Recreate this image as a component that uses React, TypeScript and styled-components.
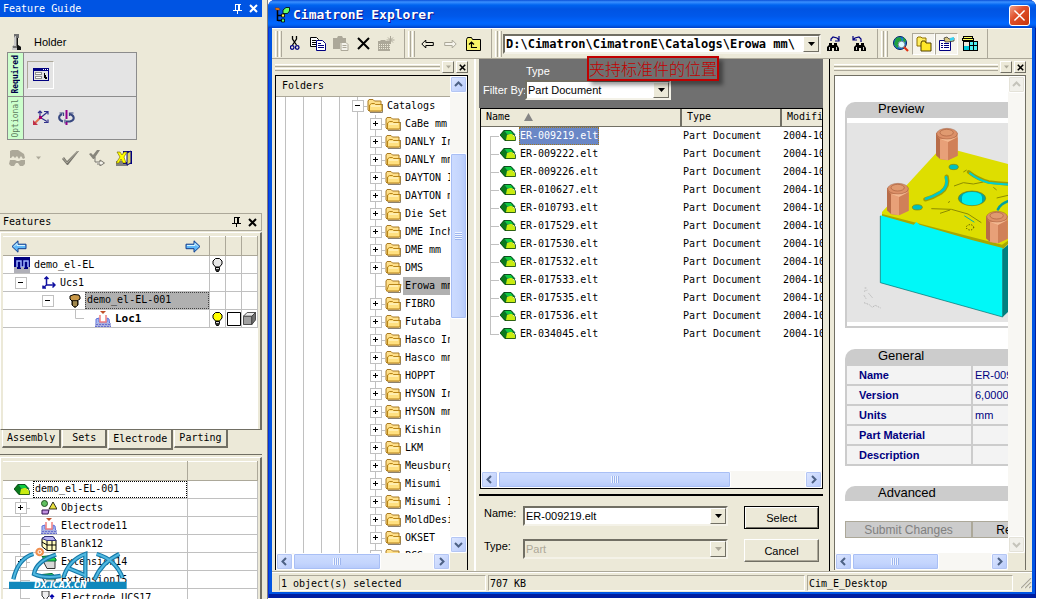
import React from "react";
import styled, { createGlobalStyle, css } from "styled-components";

const face = "#ece9d8";
const shade = "#aca899";
const dark = "#716f64";
const mono = `"DejaVu Sans Mono", "Liberation Mono", monospace`;
const sans = `"Liberation Sans", Arial, sans-serif`;

const GlobalStyle = createGlobalStyle`
  * { box-sizing: border-box; }
  html, body { margin: 0; background: #fff; overflow: hidden; }
  body { font: 10px/18px ${mono}; color: #000; }
  button, input, select { font: inherit; color: inherit; margin: 0; padding: 0; border: 0; border-radius: 0; background: none; }
  svg { display: block; flex: none; }
  table { border-collapse: collapse; border-spacing: 0; table-layout: fixed; }
  th, td { padding: 0; font-weight: inherit; text-align: left; }
  h1, h2 { margin: 0; font-size: inherit; font-weight: inherit; }
`;

/* ---------- shell ---------- */

const Screen = styled.div`
  display: grid;
  grid-template-columns: 268px minmax(0, 1fr);
  height: 100vh;
  overflow: hidden;
`;

const Sidebar = styled.aside`
  display: flex;
  flex-direction: column;
  min-height: 0;
  position: relative;
  background: ${face};
  border-right: 1px solid #808080;
  padding-right: 5px;
  overflow: hidden;
`;

const PanelTitle = styled.header<{ $active?: boolean }>`
  display: flex;
  flex: none;
  align-items: center;
  height: ${(p) => (p.$active ? 17 : 18)}px;
  padding: 0 1px 0 3px;
  background: ${(p) => (p.$active ? "#0054e3" : face)};
  color: ${(p) => (p.$active ? "#fff" : "#000")};
  ${(p) => !p.$active && css`border: 1px solid ${shade}; border-left: 0;`}
  h2 { flex: 1; }
`;

const TitleButton = styled.button`
  display: grid;
  place-items: center;
  width: 16px;
  height: 14px;
`;

const Guide = styled.section`
  flex: none;
  height: 196px;
  padding: 14px 7px 0;
`;

const HolderLine = styled.div`
  display: flex;
  gap: 13px;
  align-items: center;
  height: 21px;
  padding-left: 5px;
  font: 11px/18px ${sans};
`;

const StepTable = styled.div`
  display: grid;
  grid-template-columns: 16px 1fr;
  width: 130px;
  border: 1px solid #8c8c8c;
`;

const StepLabel = styled.div<{ $required?: boolean }>`
  display: grid;
  place-items: center;
  height: ${(p) => (p.$required ? 44 : 42)}px;
  background: #ccffcc;
  border-right: 1px solid #8c8c8c;
  border-bottom: ${(p) => (p.$required ? "1px solid #8c8c8c" : "0")};
  color: ${(p) => (p.$required ? "#00004a" : "#5c7a5c")};
  font-size: 8px;
  line-height: 12px;
  font-weight: ${(p) => (p.$required ? 700 : 400)};
  writing-mode: vertical-rl;
  span { transform: rotate(180deg); }
`;

const StepTools = styled.div<{ $line?: boolean }>`
  display: flex;
  align-items: center;
  gap: 9px;
  padding-left: ${(p) => (p.$line ? 3 : 9)}px;
  background: #e4e4e4;
  border-bottom: ${(p) => (p.$line ? "1px solid #8c8c8c" : "0")};
`;

const PlainButton = styled.button<{ $start?: boolean }>`
  display: grid;
  align-items: center;
  justify-items: ${(p) => (p.$start ? "start" : "center")};
  min-width: 16px;
  height: 20px;
  color: ${(p) => (p.$start ? shade : "inherit")};
`;

const SunkenButton = styled(PlainButton)`
  width: 27px;
  height: 28px;
  border: 1px solid;
  border-color: ${shade} #fff #fff ${shade};
`;

const ActionRow = styled.div`
  display: flex;
  align-items: center;
  gap: 10px;
  height: 36px;
  padding-left: 2px;
`;

const FeatureBox = styled.section`
  flex: none;
  height: 198px;
  margin-top: 1px;
  padding: 3px 2px 0;
  border: 1px solid;
  border-color: #fff ${dark} ${dark} #fff;
  border-right-width: 2px;
  display: flex;
  flex-direction: column;
`;

const Paper = styled.div`
  flex: 1;
  min-height: 0;
  background: #fff;
  overflow: hidden;
`;

const GridTable = styled.table`
  width: 100%;
  background: #fff;
  tbody td {
    height: 18px;
    border-bottom: 1px solid #c0c0c0;
    border-right: 1px solid #c0c0c0;
    line-height: 16px;
  }
  thead th {
    height: 19px;
    background: ${face};
    border-right: 1px solid ${shade};
    border-bottom: 1px solid ${shade};
    border-top: 1px solid #fff;
  }
`;

const NavRow = styled.div`
  display: flex;
  justify-content: space-between;
  padding: 0 8px;
  button { height: 16px; }
`;

const Cell = styled.div<{ $indent: number; $gap?: number }>`
  display: flex;
  align-items: center;
  gap: ${(p) => p.$gap ?? 4}px;
  height: 17px;
  padding-left: ${(p) => p.$indent}px;
  white-space: nowrap;
`;

const Centered = styled.div`
  display: grid;
  place-items: center;
`;

const Expander = styled.button`
  flex: none;
  width: 12px;
  height: 12px;
  display: grid;
  place-items: center;
  background: #fff;
  border: 1px solid #c0c0c0;
`;

const Chosen = styled.span`
  flex: 1;
  height: 17px;
  padding-left: 1px;
  background: #b0b0b0;
  border: 1px dotted #444;
  line-height: 14px;
`;

const Focused = styled(Chosen)`
  background: #fff;
  border-color: #000;
`;

const Loud = styled.b`
  font-size: 11px;
`;

const Tabs = styled.nav`
  display: flex;
  flex: none;
  height: 25px;
  padding-left: 2px;
  border-bottom: 1px solid ${dark};
`;

const Tab = styled.button<{ $on?: boolean }>`
  height: ${(p) => (p.$on ? 20 : 18)}px;
  padding: 0 4px;
  margin-right: 1px;
  line-height: 16px;
  min-width: 45px;
  border-right: 2px solid ${dark};
  border-bottom: 2px solid ${dark};
  border-left: 1px solid #fff;
  background: ${face};
`;

const ObjectBox = styled.section`
  flex: 1;
  min-height: 0;
  margin-top: 2px;
  padding: 3px 2px 0;
  border: 1px solid #fff;
  border-right: 2px solid ${dark};
  border-bottom: 0;
  overflow: hidden;
`;

const Watermark = styled.div`
  position: absolute;
  left: 8px;
  bottom: 9px;
`;

/* ---------- explorer window ---------- */

const Window = styled.main`
  display: flex;
  flex-direction: column;
  min-width: 0;
  height: calc(100vh - 1px);
  margin-right: 1px;
  background: #0054e3;
  border-radius: 7px 7px 0 0;
  padding: 0 4px 6px;
  box-shadow: inset 1px 0 #0831d9, inset -1px 0 #001ea0, inset 0 -4px #001ea0;
  overflow: hidden;
`;

const TitleBar = styled.header`
  display: flex;
  flex: none;
  align-items: center;
  gap: 3px;
  height: 28px;
  margin: 0 -4px;
  padding: 2px 6px 0 7px;
  color: #fff;
  font-size: 13px;
  font-weight: 700;
  text-shadow: 1px 1px #0f1089;
  background: linear-gradient(#0a4fd8, #3a90ff 2px, #0064f0 5px, #0054e3 9px, #0058ea 16px, #0066ff 23px, #0062f5 25px, #003fc6 28px);
  h1 { flex: 1; }
`;

const CloseButton = styled.button`
  display: grid;
  place-items: center;
  width: 21px;
  height: 21px;
  border: 1px solid #fff;
  border-radius: 3px;
  background: linear-gradient(135deg, #f0a088, #e0502c 40%, #c83408);
`;

const ToolBar = styled.div`
  display: flex;
  flex: none;
  align-items: center;
  height: 31px;
  padding-right: 44px;
  background: ${face};
  border-top: 1px solid #fff;
  border-bottom: 1px solid ${shade};
`;

const Band = styled.div<{ $grow?: boolean }>`
  display: flex;
  align-items: center;
  height: 29px;
  flex: ${(p) => (p.$grow ? "1 1 0" : "none")};
  min-width: 0;
  border-right: 1px solid ${shade};
  padding: 0 6px 0 3px;
`;

const Grip = styled.span`
  flex: none;
  width: 7px;
  height: 26px;
  margin-right: 1px;
  background: linear-gradient(90deg, #fff 1px, ${face} 1px 2px, ${shade} 2px 3px, ${face} 3px 4px, #fff 4px 5px, ${face} 5px 6px, ${shade} 6px);
`;

const Tool = styled.button<{ $pressed?: boolean; $wide?: boolean }>`
  flex: none;
  display: grid;
  place-items: center;
  width: ${(p) => (p.$wide ? 25 : 23)}px;
  height: 22px;
  ${(p) =>
    p.$pressed &&
    css`
      border: 1px solid;
      border-color: ${shade} #fff #fff ${shade};
      background: #f6f4ec;
    `}
`;

const Combo = styled.div<{ $bold?: boolean; $off?: boolean }>`
  display: flex;
  flex: 1 1 0;
  min-width: 0;
  height: 20px;
  background: ${(p) => (p.$off ? face : "#fff")};
  color: ${(p) => (p.$off ? shade : "#000")};
  border: 2px solid;
  border-color: ${dark} #f4f2e8 #f4f2e8 ${dark};
  font: ${(p) => (p.$bold ? `700 12px/16px ${mono}` : `11px/16px ${sans}`)};
  input, select {
    flex: 1;
    min-width: 0;
    width: 0;
    height: 16px;
    padding-left: 1px;
    appearance: none;
    outline: 0;
    opacity: 1;
  }
`;

const DropButton = styled.button<{ $off?: boolean }>`
  flex: none;
  display: grid;
  place-items: center;
  width: 16px;
  height: 16px;
  background: ${face};
  color: ${(p) => (p.$off ? shade : "#000")};
  border: 1px solid;
  border-color: #fff ${dark} ${dark} #fff;
`;

const Panes = styled.div`
  flex: 1;
  min-height: 0;
  display: grid;
  grid-template-columns: 206px minmax(0, 1fr) 206px;
  background: ${face};
`;

const DockPane = styled.section<{ $side?: boolean }>`
  display: flex;
  flex-direction: column;
  min-width: 0;
  min-height: 0;
  ${(p) =>
    p.$side
      ? css`margin-left: 3px; border-left: 1px solid #000; padding: 0 6px 1px 4px;`
      : css`border-right: 2px solid #fff; margin-right: 2px; padding: 0 6px 1px 3px;`}
`;

const DockHead = styled.div`
  display: flex;
  flex: none;
  align-items: center;
  gap: 2px;
  height: 16px;
`;

const DockGrip = styled.span`
  flex: 1;
  height: 7px;
  background: linear-gradient(#fff 1px, ${face} 1px 2px, ${shade} 2px 3px, ${face} 3px 4px, #fff 4px 5px, ${face} 5px 6px, ${shade} 6px);
`;

const DockButton = styled.button<{ $faint?: boolean }>`
  display: grid;
  place-items: center;
  width: 12px;
  height: 12px;
  color: ${(p) => (p.$faint ? shade : "#000")};
  border: 1px solid;
  border-color: #fff ${dark} ${dark} #fff;
`;

const ScrollFrame = styled.div<{ $soft?: boolean }>`
  flex: 1;
  min-height: 0;
  display: grid;
  grid-template-columns: minmax(0, 1fr) 17px;
  grid-template-rows: minmax(0, 1fr) 17px;
  border: 1px solid ${(p) => (p.$soft ? dark : "#000")};
  border-bottom: 0;
  background: ${face};
`;

const Tree = styled.div`
  background: #fff;
  overflow: hidden;
`;

const TreeHeader = styled.div`
  height: 21px;
  padding-left: 6px;
  background: ${face};
  border-bottom: 1px solid ${shade};
  line-height: 20px;
`;

const TreeList = styled.ul`
  list-style: none;
  margin: 0;
  padding: 0 0 0 1px;
`;

const TreeRow = styled.li`
  display: flex;
  align-items: center;
  height: 18px;
  white-space: nowrap;
`;

const Rail = styled.span<{ $elbow?: boolean }>`
  flex: none;
  display: grid;
  place-items: center;
  width: 18px;
  height: 18px;
  background: linear-gradient(90deg, transparent 8px, #c0c0c0 8px 9px, transparent 9px)
    ${(p) => p.$elbow && ", linear-gradient(transparent 9px, #c0c0c0 9px 10px, transparent 10px) 8px 0 / 10px 18px no-repeat"};
`;

const TreeLabel = styled.span<{ $on?: boolean }>`
  flex: 1;
  height: 18px;
  margin-left: 1px;
  padding-left: 2px;
  line-height: 17px;
  background: ${(p) => (p.$on ? "#b0b0b0" : "none")};
`;

/* scroll bars */

const Bar = styled.div<{ $v?: boolean }>`
  display: flex;
  flex-direction: ${(p) => (p.$v ? "column" : "row")};
  background: #f8f7f3;
  min-width: 0;
  min-height: 0;
  ${(p) => (p.$v ? "width: 17px;" : "height: 17px;")}
`;

const ArrowButton = styled.button<{ $off?: boolean }>`
  flex: none;
  display: grid;
  place-items: center;
  width: 17px;
  height: 17px;
  border: 1px solid #fff;
  border-radius: 2px;
  color: ${(p) => (p.$off ? "#c5c4bb" : "#4d6185")};
  background: ${(p) => (p.$off ? "#f1f0ea" : "linear-gradient(135deg, #dfe8ff, #b7cafb)")};
  box-shadow: inset 0 0 0 1px ${(p) => (p.$off ? "#e4e2d8" : "#b4c6f4")};
`;

const Thumb = styled.div<{ $v?: boolean; $size: number }>`
  flex: ${(p) => p.$size} 1 0;
  display: grid;
  place-items: center;
  border: 1px solid #fff;
  border-radius: 2px;
  box-shadow: inset 0 0 0 1px #a9bff5;
  background: linear-gradient(${(p) => (p.$v ? "90deg" : "180deg")}, #cddcff, #c4d5fd 60%, #b5c9fa);
`;

const Track = styled.span<{ $size: number }>`
  flex: ${(p) => p.$size} 1 0;
`;

const ThumbMarks = styled.span<{ $v?: boolean }>`
  width: ${(p) => (p.$v ? 7 : 8)}px;
  height: ${(p) => (p.$v ? 8 : 7)}px;
  background: repeating-linear-gradient(${(p) => (p.$v ? "180deg" : "90deg")}, #f0f5ff 0 1px, #9db5ee 1px 2px);
`;

/* centre */

const Center = styled.section`
  position: relative;
  display: flex;
  flex-direction: column;
  min-width: 0;
  min-height: 0;
  padding: 0 3px 0 1px;
`;

const FilterArea = styled.div`
  flex: none;
  height: 49px;
  padding: 3px 0 0 4px;
  background: #707070;
  color: #fff;
  font: 11px/18px ${sans};
`;

const FilterCaption = styled.div`
  padding-left: 43px;
`;

const FilterLine = styled.div`
  display: flex;
  align-items: center;
  label { width: 42px; white-space: nowrap; }
`;

const FilterCombo = styled(Combo)`
  flex: none;
  width: 146px;
`;

const Note = styled.div`
  position: absolute;
  left: 109px;
  top: -3px;
  height: 25px;
  padding: 0;
  border: 2px solid #c00000;
  color: #c00000;
  background: #707070;
  box-shadow: 4px 4px 4px rgba(0, 0, 0, 0.4);
  font: 300 16px/21px "Noto Sans CJK SC", sans-serif;
  white-space: nowrap;
`;

const ListFrame = styled.div`
  flex: 1;
  min-height: 0;
  display: flex;
  flex-direction: column;
  margin-left: 1px;
  border: 1px solid #000;
  background: #fff;
`;

const ListBody = styled.div`
  flex: 1;
  min-height: 0;
  overflow: hidden;
`;

const FileTable = styled.table`
  width: 400px;
  th {
    height: 17px;
    padding-left: 5px;
    line-height: 16px;
    background: ${face};
    border-right: 2px solid ${dark};
    border-bottom: 1px solid ${dark};
  }
  td {
    height: 18px;
    padding-left: 2px;
    line-height: 17px;
    white-space: nowrap;
  }
  td:first-child { padding-left: 0; }
`;

const HeaderCell = styled.span`
  display: flex;
  align-items: center;
  gap: 14px;
`;

const FileCell = styled.div`
  display: flex;
  align-items: center;
  height: 18px;
`;

const Branch = styled.span<{ $first?: boolean; $last?: boolean }>`
  width: 19px;
  height: 18px;
  flex: none;
  background:
    linear-gradient(#c0c0c0, #c0c0c0) 9px 9px / 9px 1px no-repeat,
    linear-gradient(#c0c0c0, #c0c0c0) 9px ${(p) => (p.$first ? 9 : 0)}px / 1px ${(p) => (p.$last ? 9 : 18)}px no-repeat;
`;

const FileName = styled.span<{ $on?: boolean }>`
  height: 18px;
  margin-left: 3px;
  border: 1px dotted ${(p) => (p.$on ? "#a07820" : "transparent")};
  background: ${(p) => (p.$on ? "#6a87c6" : "none")};
  color: ${(p) => (p.$on ? "#fff" : "#000")};
  line-height: 15px;
`;

const Form = styled.form`
  flex: none;
  display: grid;
  grid-template-columns: 38px minmax(0, 1fr) 75px;
  column-gap: 1px;
  row-gap: 10px;
  margin-top: 5px;
  padding: 10px 4px 9px 5px;
  border-top: 2px solid #000;
  font: 11px/14px ${sans};
  > div { margin-right: 15px; }
`;

const PushButton = styled.button<{ $main?: boolean }>`
  height: 23px;
  background: ${face};
  border: 1px solid;
  border-color: ${(p) => (p.$main ? "#000" : `#fff ${dark} ${dark} #fff`)};
  box-shadow: ${(p) => (p.$main ? `inset 1px 1px #fff, inset -1px -1px ${dark}` : `inset -1px -1px ${shade}`)};
`;

/* details */

const Details = styled.div`
  background: #fff;
  padding: 26px 0 0 10px;
  overflow: hidden;
`;

const CardTitle = styled.h2<{ $tall?: boolean }>`
  height: ${(p) => (p.$tall ? 16 : 15)}px;
  padding-left: 33px;
  border-radius: 10px 0 0 0;
  background: #ccc;
  font: 13px/14px ${sans};
`;

const PreviewBox = styled.div`
  height: 210px;
  margin-bottom: 21px;
  padding: 5px 0;
  border: 2px solid #ccc;
  border-width: 0 0 2px 2px;
  overflow: hidden;
`;

const PropTable = styled.table`
  width: 240px;
  margin-bottom: 20px;
  color: #000080;
  font: 11px/14px ${sans};
  th, td {
    height: 20px;
    border: 2px solid #ccc;
    background: #f3f3f3;
  }
  th { font-weight: 700; padding-left: 12px; }
  td { padding-left: 2px; white-space: nowrap; }
`;

const ButtonStrip = styled.div`
  display: flex;
  margin-top: 20px;
  width: 250px;
`;

const FormButton = styled.button<{ $w: number }>`
  flex: none;
  width: ${(p) => p.$w}px;
  height: 17px;
  background: #ccc;
  border: 1px solid ${shade};
  font: 12px/14px ${sans};
  &:disabled { color: #808080; }
`;

/* status */

const StatusBar = styled.footer`
  flex: none;
  display: flex;
  gap: 2px;
  height: 21px;
  padding: 3px 0 1px 7px;
  background: ${face};
  border-top: 1px solid ${shade};
  box-shadow: inset 0 1px #fff;
`;

const StatusCell = styled.div<{ $w?: number }>`
  ${(p) => (p.$w ? `flex: none; width: ${p.$w}px;` : "flex: 1;")}
  padding-left: 1px;
  border: 1px solid;
  border-color: ${shade} #fff #fff ${shade};
  line-height: 16px;
  &:last-of-type { margin-right: 3px; }
`;

/* ---------- drawings ---------- */

const Pin = () => (
  <svg width="9" height="10" viewBox="0 0 9 10" fill="none" stroke="currentColor" shapeRendering="crispEdges">
    <path d="M2 .5h6M2.500 0v6M5.500 0v6M6.500 0v6M0 6.500h9M4.500 6v4" />
  </svg>
);
const Cross = ({ s = 9, w = 2 }: { s?: number; w?: number }) => (
  <svg width={s} height={s} viewBox="0 0 9 9" stroke="currentColor" strokeWidth={w}>
    <path d="M1 1l7 7M8 1L1 8" />
  </svg>
);
const Caret = ({ s = 7 }: { s?: number }) => (
  <svg width={s} height="4" viewBox="0 0 7 4" fill="currentColor"><path d="M0 0h7L3.500 4z" /></svg>
);
const Chevron = ({ d }: { d: "up" | "down" | "left" | "right" }) => {
  const p = { up: "M1 6l3.500-3.500L8 6", down: "M1 3l3.500 3.500L8 3", left: "M6 1L2.500 4.500 6 8", right: "M3 1l3.500 3.500L3 8" };
  return <svg width="9" height="9" viewBox="0 0 9 9" fill="none" stroke="currentColor" strokeWidth="2"><path d={p[d]} /></svg>;
};
const Sign = ({ plus }: { plus?: boolean }) => (
  <svg width="6" height="6" viewBox="0 0 6 6" stroke="#000" shapeRendering="crispEdges">
    <path d={plus ? "M0 2.500h5M2.500 0v5" : "M0 2.500h5"} />
  </svg>
);

const HolderIcon = () => (
  <svg width="9" height="16" viewBox="0 0 9 16">
    <path d="M2 0h5v4H6v7l3 2v3H0v-3l2-2z" fill="#707070" />
    <path d="M3 2h1v10H1v2h4v2H0v-3l2-2V4z" fill="#c8c8c8" />
    <path d="M5 4h1v7l3 2v3H5z" fill="#111" />
  </svg>
);
const DialogIcon = () => (
  <svg width="16" height="13" viewBox="0 0 16 13" shapeRendering="crispEdges">
    <path d="M0 0h16v13H0z" fill="#000080" /><path d="M1 3h14v9H1z" fill="#e4e4e4" />
    <path d="M10 1h1v1h-1zM12 1h1v1h-1zM14 1h1v1h-1z" fill="#fff" />
    <path d="M2.500 4.500h6v2h-6zM2.500 8.500h6v2h-6z" fill="#fff" stroke="#909090" /><path d="M11 5v5h1v1h2V9h-1V7h-1V5z" fill="#000" />
  </svg>
);
const MoveIcon = () => (
  <svg width="16" height="16" viewBox="0 0 16 16" fill="none">
    <path d="M7 8L2 13" stroke="#e07050" strokeWidth="2" /><path d="M0 10v5h5z" fill="#c03048" />
    <path d="M7 7V2M5 3l2-2 2 2M8.500 7l6-5M11 1.500h4v3M9 8.500l5 3M11 12.500h4v-3" stroke="#30308c" strokeWidth="1.200" />
    <path d="M6 6h3v3H6z" fill="#a00070" />
  </svg>
);
const RotateIcon = () => (
  <svg width="18" height="16" viewBox="0 0 18 16" fill="none">
    <path d="M4 4C0 6 0 10 5 11.500M12 4c5 2 5 6 0 7.500H8" stroke="#384880" strokeWidth="2" />
    <path d="M1.500 3h4v3M7 9.500v4M15.500 3h-4v3" stroke="#384880" strokeWidth="1.200" /><path d="M8.500 0v9M8.500 12v3" stroke="#90008c" strokeWidth="2" />
  </svg>
);
const GlassesIcon = () => (
  <svg width="17" height="16" viewBox="0 0 17 16" fill={shade}>
    <path d="M1 1l2-1h6l6 4 1 4-2 1-2-3-2 3-2-3-2 2-2-2-2 2H1zM1 10h5l2 1h2l2-1h4v4l-2 2h-3l-2-3H7l-2 3H2l-2-2z" />
  </svg>
);
const CheckIcon = () => (
  <svg width="17" height="16" viewBox="0 0 17 16"><path d="M0 9l2-2 3 4L15 1h2L6 15H5z" fill="#77756c" /><path d="M1 8l4 5L16 1" stroke="#aaa79a" fill="none" /></svg>
);
const CheckNextIcon = () => (
  <svg width="17" height="16" viewBox="0 0 17 16">
    <path d="M0 4l2-1 2 2 4-5h3L5 9H4z" fill="#88867c" /><path d="M6 7v5h5v-2l4.500 3-4.500 3v-2H8" fill="#f4f2ea" stroke="#77756c" />
  </svg>
);
const ExitIcon = () => (
  <svg width="17" height="16" viewBox="0 0 17 16">
    <path d="M0 11h12v5H0z" fill="#808080" /><path d="M7 1h9v13h-9z" fill="#000080" /><path d="M8 2h3v10H8z" fill="#fff" />
    <path d="M11 3l4-2v12l-4 2z" fill="#e0d860" stroke="#000080" />
    <path d="M1 2h3l2 3 2-3h3L8 7l2 6H7L5 9l-2 4H0l4-6z" fill="#ff0" stroke="#706000" strokeWidth=".6" />
  </svg>
);
const NavArrow = ({ right }: { right?: boolean }) => (
  <svg width="16" height="13" viewBox="0 0 16 13" transform={right ? "scale(-1 1)" : undefined}>
    <path d="M1 6.500L7 .8v3.400h8v4.500H7v3.500z" fill="#60b8f8" stroke="#123c8c" /><path d="M3 6.500l3-3v2h8" fill="none" stroke="#d8f4ff" />
  </svg>
);
const ElectrodeRoot = () => (
  <svg width="16" height="16" viewBox="0 0 16 16">
    <path d="M0 0h16v16H0z" fill="#000080" /><path d="M3 10V4h4v6h3V4h4v6" fill="none" stroke="#9eb4ff" strokeWidth="1.500" />
    <path d="M0 10h3v2h4v-2h3v2h4v-2h2v6H0z" fill="#b0b0b8" />
  </svg>
);
const UcsIcon = () => (
  <svg width="14" height="13" viewBox="0 0 14 13" fill="none" stroke="#1010a0" strokeWidth="1.500">
    <path d="M4.500 1v8H13M4.500 9L1 12M2.500 3l2-2 2 2M10.500 6.500L13 9l-2.500 2.500M1 9.500V12h3" />
  </svg>
);
const BoltIcon = () => (
  <svg width="12" height="14" viewBox="0 0 12 14">
    <path d="M1 2l4-1.500 5 .5 1 2v2L8 7H3L1 5z" fill="#c89848" stroke="#000" /><path d="M3 7h6v4l-3 2.500L3 11z" fill="#58400c" stroke="#000" /><path d="M5 7v5M7 7v5" stroke="#e8d090" />
  </svg>
);
const ElectrodeIcon = () => (
  <svg width="16" height="16" viewBox="0 0 16 16">
    <path d="M1 15V8l3-1v4h8V7l2 1 1 7z" fill="#a8bcf4" stroke="#6070d8" /><path d="M0 12h16v4H0z" fill="#a8b0e0" /><path d="M0 15.500h16M1 13.500h14" stroke="#6870d0" strokeDasharray="2 1" />
    <path d="M5 4v7h6V4" fill="#fff" stroke="#f08080" strokeWidth="1.500" /><path d="M5 0h6L8 3z" fill="#c05028" />
  </svg>
);
const Bulb = ({ on }: { on?: boolean }) => (
  <svg width="11" height="14" viewBox="0 0 11 14">
    <path d="M3.500 9L1 6V3l2.500-2.500h4L10 3v3L7.500 9z" fill={on ? "#ff0" : "#e8e8e8"} stroke="#000" /><path d="M3.500 9.500h4v2l-1 2h-2l-1-2z" fill="#333" stroke="#000" /><path d="M4 10.500h3" stroke="#ddd" />
  </svg>
);
const EmptySquare = () => <svg width="14" height="14"><path d="M.5.5h13v13H.5z" fill="#fff" stroke="#000" /></svg>;
const CubeIcon = () => (
  <svg width="13" height="13" viewBox="0 0 14 14" stroke="#404040"><path d="M.5 4.500h9v9h-9z" fill="#a0a0a0" /><path d="M.5 4.500l4-4h9l-4 4z" fill="#e8e8e8" /><path d="M9.500 4.500l4-4v8l-4 5z" fill="#707070" /></svg>
);
const PartIcon = () => (
  <svg width="16" height="11" viewBox="0 0 16 11">
    <path d="M0 5l4-5 3 4v7H5z" fill="#0a7a1c" /><path d="M4 .5h7l4 4H7z" fill="#10cc40" stroke="#064" strokeWidth=".7" />
    <path d="M6 10l1-5 3-1h2l3 3v4H5z" fill="#c8ec10" /><path d="M0 5l5 5.500h10.500V7L11 .5H4z" fill="none" stroke="#064010" strokeWidth=".8" />
  </svg>
);
const ObjectsIcon = () => (
  <svg width="16" height="15" viewBox="0 0 16 15">
    <circle cx="3.500" cy="3.500" r="3" fill="#60c060" stroke="#205020" /><path d="M8 9l4-7 4 7z" fill="#e8e040" stroke="#000" strokeWidth=".8" /><path d="M1 10h7l-1 4H1z" fill="#c090e0" stroke="#301050" />
  </svg>
);
const BlankIcon = () => (
  <svg width="16" height="15" viewBox="0 0 16 15" strokeLinejoin="round">
    <path d="M1 2.500L4 .5h8l3 4v10H6l-5-4z" fill="#fffbc0" stroke="#000" /><path d="M1 2.500L4 .5h8l3 4H6z" fill="#b4b0f0" stroke="#30307c" /><path d="M6 5v9M1 6l5 3h9M11 5v9" fill="none" stroke="#000" />
  </svg>
);
const ExtensionIcon = () => (
  <svg width="16" height="14" viewBox="0 0 16 14">
    <path d="M1 4h13v9.500H6z" fill="#d8d8d8" stroke="#333" /><path d="M1 1.500l10-1L15 4v2H5z" fill="#20d850" stroke="#063" />
  </svg>
);
const UcsBoltIcon = () => (
  <svg width="16" height="14" viewBox="0 0 16 14"><path d="M1 0h7v5L6 7v6H3V7L1 5z" fill="#eee" stroke="#333" /><path d="M11 4v7M9 6l2-2 2 2M9 11h6" stroke="#00a" fill="none" strokeWidth="1.500" /></svg>
);

const AppIcon = () => (
  <svg width="15" height="16" viewBox="0 0 15 16">
    <path d="M2.500 3v11M3 8.500h4M3 13.500h4" stroke="#000" fill="none" strokeWidth="1.500" /><path d="M0 1h4l1 2H1z" fill="#ff9020" stroke="#803000" strokeWidth=".6" />
    <path d="M8 3l3-2.500h3.500V4l-2 2.500H8z" fill="#6f6" stroke="#000" strokeWidth=".8" /><path d="M6.500 7h3v3h-3z" fill="#ff4" stroke="#000" strokeWidth=".8" /><path d="M6.500 12h3v3h-3z" fill="#6f6" stroke="#000" strokeWidth=".8" />
  </svg>
);
const CutIcon = () => (
  <svg width="10" height="15" viewBox="0 0 10 15" fill="none" strokeWidth="1.300"><path d="M2.500 0v3l4 6M6.500 0v3l-4 6" stroke="#000" /><circle cx="2.200" cy="11.500" r="1.800" stroke="#000080" /><circle cx="7.200" cy="11.500" r="1.800" stroke="#000080" /></svg>
);
const CopyIcon = () => (
  <svg width="16" height="14" viewBox="0 0 16 14"><path d="M.5.500h6l2 2V9.500h-8z" fill="#fff" stroke="#000" /><path d="M2 3.500h4M2 5.500h4M2 7.500h4" stroke="#000" /><path d="M6.500 3.500h6l3 3v7h-9z" fill="#fff" stroke="#000080" /><path d="M8 6.500h3M8 8.500h6M8 10.500h6" stroke="#000080" /></svg>
);
const PasteIcon = () => (
  <svg width="16" height="15" viewBox="0 0 16 15"><path d="M0 2h4l1-2h4l1 2h3v5H7v6H0z" fill={shade} /><path d="M8 6.500h5l2 2v6H8z" fill="#f4f2ea" stroke={shade} /><path d="M9.500 9.500h4M9.500 11.500h4" stroke={shade} /></svg>
);
const DeleteIcon = () => <svg width="13" height="13" viewBox="0 0 13 13" stroke="#000" strokeWidth="2"><path d="M1 1l11 11M12 1L1 12" /></svg>;
const NewFolderIcon = () => (
  <svg width="17" height="15" viewBox="0 0 17 15"><path d="M0 5h2l1-1h4l1 1h4v10H0z" fill={shade} /><path d="M12.500 0v8M8.500 4h8M10 1.500l5 5M15 1.500l-5 5" stroke={shade} /><path d="M1 8.500h11M1 10.500h11M1 12.500h11" stroke={face} strokeDasharray="1 1" /></svg>
);
const HistoryArrow = ({ off }: { off?: boolean }) => (
  <svg width="13" height="10" viewBox="0 0 13 10" fill={off ? "#f6f4ec" : face} stroke={off ? shade : "#000"} transform={off ? "scale(-1 1)" : undefined}><path d="M.8 5l4-4v2.500h7.500v3H4.800V9z" /></svg>
);
const UpIcon = () => (
  <svg width="15" height="14" viewBox="0 0 15 14"><path d="M.5 2.500l1-2h4l1 2h8v11H.5z" fill="#f8f468" stroke="#000" /><path d="M5.500 5v5.500H11M3 7.500L5.500 5 8 7.500" fill="none" stroke="#000" strokeWidth="1.200" /></svg>
);
const FindIcon = ({ back }: { back?: boolean }) => (
  <svg width="14" height="16" viewBox="0 0 14 16">
    <g transform={back ? "translate(2 0)" : undefined}>
      <path d="M2 7h3v2h2V7h3v2l2 3v3H7v-3H5v3H0v-4l2-2z" fill="#000" /><path d="M2.500 11v3M9.500 11v3" stroke="#ccc" />
    </g>
    <path d={back ? "M9 6V3L7 1 3 2 1 4M1 0v4h4" : "M4 5V3l2-2 4 1 2 2M12 0v5H8"} fill="none" stroke="#000080" strokeWidth="1.200" />
  </svg>
);
const GlobeIcon = () => (
  <svg width="16" height="16" viewBox="0 0 16 16"><circle cx="7" cy="7" r="6.500" fill="#1878d8" stroke="#002060" /><path d="M3 2l4-1 2 3-3 3 1 3-3 2-3-4zM10 1l3 3-1 3-2-2z" fill="#20a040" /><circle cx="8.500" cy="8.500" r="3.300" fill="#d8fcff" stroke="#789" /><path d="M11 11l4 4" stroke="#e03010" strokeWidth="2.200" /></svg>
);
const FoldersIcon = () => (
  <svg width="16" height="16" viewBox="0 0 16 16"><path d="M1 2l1-1h3l1 1h4v8H1z" fill="#ffee60" stroke="#907000" /><path d="M5 7l1-2h3l1 2h5v8H5z" fill="#ffe828" stroke="#504000" /></svg>
);
const PropsIcon = () => (
  <svg width="17" height="16" viewBox="0 0 17 16"><path d="M1.500 4.500h11v10h-11z" fill="#fff" stroke="#000080" /><path d="M3 7.500h2M6 7.500h5M3 9.500h2M6 9.500h5M3 11.500h2M6 11.500h5" stroke="#000080" /><path d="M6 2l3-1 2 2 5-1v3l-6 1-3 0z" fill="#d8c880" stroke="#222" strokeWidth=".7" /><path d="M12 2l4-1v3l-4 1z" fill="#38d0f0" /></svg>
);
const StoreIcon = () => (
  <svg width="16" height="16" viewBox="0 0 16 16" shapeRendering="crispEdges"><path d="M1.500 5.500h10v9h-10z" fill="#ece9d8" stroke="#000" /><path d="M2 10h8v4H2z" fill="#00c8d8" /><path d="M7.500 5.500h8v9h-8z" fill="#50f0f0" stroke="#000" /><path d="M8 9.500h8M11.500 6v8" stroke="#000" /><path d="M1.500.500h9l1 4H.5z" fill="#ffff60" stroke="#000" /><path d="M1 2.500h10" stroke="#000" /></svg>
);
const FolderIcon = ({ open }: { open?: boolean }) => (
  <svg width="17" height="14" viewBox="0 0 17 14">
    <path d="M3 13.500h12.500V5" fill="none" stroke="#8a8070" /><path d="M1 11V2l1-1.500h4L7.500 2H14v10H2z" fill="#ffe08a" stroke="#a87820" />
    <path d={open ? "M1.500 12L4 5.500h12L14 12z" : "M2.500 12V6l2-1.500h3L8.500 5.500H15V12z"} fill="#ffe080" stroke="#b88418" />
    <path d="M4 7h9" stroke="#fffbe0" />
  </svg>
);
const SortMark = () => <svg width="9" height="8"><path d="M4.500 0L9 8H0z" fill="#858585" /></svg>;
const SizeGrip = () => (
  <svg width="14" height="14" viewBox="0 0 14 14"><path d="M2 13L13 2M6 13l7-7M10 13l3-3" stroke="#fff" /><path d="M3 13L13 3M7 13l6-6M11 13l2-2" stroke={shade} strokeWidth="1.200" /></svg>
);

const Electrode = ({ x, y }: { x: number; y: number }) => (
  <g transform={`translate(${x} ${y})`}>
    <path d="M0 14v68l12 12 24 3 29-14V14z" fill="#d88a60" />
    <path d="M0 14v68l12 10V34L2 22z" fill="#b86c48" /><path d="M12 34l24 8v55l-24-5z" fill="#e8a078" />
    <path d="M36 42l29-14v55L36 97z" fill="#d08058" /><path d="M12 34l24-2 27-4-27 14z" fill="#f4b890" />
    <ellipse cx="33" cy="17" rx="31" ry="16" fill="#dc9068" stroke="#7c4028" />
    <ellipse cx="32" cy="14" rx="20" ry="10" fill="#e09a70" stroke="#a86040" strokeWidth="2" />
  </g>
);
const PartPreview = () => (
  <svg width="161" height="199" viewBox="81 129 483 597" role="img" aria-label="Part preview">
    <path d="M81 129h483v597H81z" fill="#e4e4e4" />
    <path d="M348 220l66-8 150 40v240l-16 16L186 410v-14z" fill="#dede00" />
    <path d="M186 402l360 92 18-12v10l-16 16L186 412z" fill="#a8a800" />
    <path d="M181 406l100 28 8-8 10 8 156 46 93 24v207L181 608z" fill="#00f8f8" />
    <path d="M548 508l16-14v202l-16 15z" fill="#008080" />
    <path d="M181 408v200l367 103V508" fill="none" stroke="#006868" strokeWidth="2" />
    <g fill="none" stroke="#8c8c00" strokeWidth="3">
      <path d="M402 318l28-10 30 4 30-6M334 386l60 2 50 14 40 26M520 322l10 8M530 354l34-8M440 270l-10 6M360 400l30-10M384 368l6-4" />
    </g>
    <g fill="none" strokeLinecap="round">
      <path d="M380 290q8 30-18 48-22 14-46 20" stroke="#a0a000" strokeWidth="13" /><path d="M378 292q8 28-16 44-22 14-44 20" stroke="#00c8c8" strokeWidth="8" />
      <path d="M446 276q28 22 60 30 28 4 70 6" stroke="#a0a000" strokeWidth="11" /><path d="M450 280q24 20 56 28 28 4 70 6" stroke="#00d0d0" strokeWidth="6" />
      <path d="M534 388q8-18 34-26" stroke="#00a0a0" strokeWidth="8" /><path d="M434 408l28 18" stroke="#00b0b0" strokeWidth="3" />
    </g>
    <ellipse cx="456" cy="355" rx="41" ry="22" fill="#00a8a8" stroke="#808000" strokeWidth="2" />
    <path d="M426 350q4-14 30-14t30 14v16q-10 10-30 10t-30-10z" fill="#00f0f0" />
    <ellipse cx="401" cy="261" rx="14" ry="8" fill="#00c0c0" stroke="#808000" strokeWidth="2" />
    <ellipse cx="292" cy="382" rx="15" ry="8" fill="#00c0c0" stroke="#808000" strokeWidth="2" />
    <ellipse cx="450" cy="442" rx="11" ry="8" fill="none" stroke="#303000" strokeWidth="3" strokeDasharray="3 5" />
    <Electrode x={348} y={144} /><Electrode x={201} y={309} /><Electrode x={498} y={393} />
    <path d="M134 624h8M132 634l10-4M132 646l6 10M146 640l12 14M132 668l16 6 8 8 10-6 16 8" stroke="#a0a0a0" strokeWidth="2" fill="none" strokeDasharray="5 3" />
  </svg>
);

const Logo = () => (
  <svg width="120" height="44" viewBox="24 380 360 132">
    <path d="M27 487h353v22H27z" fill="#1088bc" />
    <g fill="none" stroke="#1478a8" strokeWidth="13"><path d="M40 480q14-62 60-76M168 406q-60 20-66 58 30 14 80 6M190 476q16-54 66-72v72M204 446l52 22M290 404q56 16 78 72M358 404q-54 26-74 76" /></g>
    <g fill="none" stroke="#50b8e0" strokeWidth="6"><path d="M40 480q14-62 60-76M168 406q-60 20-66 58 30 14 80 6M190 476q16-54 66-72v72M204 446l52 22M290 404q56 16 78 72M358 404q-54 26-74 76" /></g>
    <circle cx="119" cy="398" r="13" fill="#f09050" /><circle cx="119" cy="398" r="5" fill="none" stroke="#fff" strokeWidth="3" />
    <text x="102" y="505" fill="#fff" fontFamily="DejaVu Sans, sans-serif" fontWeight="700" fontStyle="italic" fontSize="24">DX.ICAX.CN</text>
  </svg>
);

/* ---------- composite parts ---------- */

function ScrollBar({ v, off, before = 0, size = 0, after = 1 }: { v?: boolean; off?: boolean; before?: number; size?: number; after?: number }) {
  return (
    <Bar $v={v}>
      <ArrowButton $off={off} aria-label="Back"><Chevron d={v ? "up" : "left"} /></ArrowButton>
      {before > 0 && <Track $size={before} />}
      {size > 0 && <Thumb $v={v} $size={size}><ThumbMarks $v={v} /></Thumb>}
      <Track $size={after} />
      <ArrowButton $off={off} aria-label="Forward"><Chevron d={v ? "down" : "right"} /></ArrowButton>
    </Bar>
  );
}

const DockHeader = () => (
  <DockHead>
    <DockGrip />
    <DockButton $faint aria-label="Options"><Caret s={5} /></DockButton>
    <DockButton aria-label="Close"><Cross s={7} /></DockButton>
  </DockHead>
);

const folders = ["CaBe mm", "DANLY Inch", "DANLY mm", "DAYTON Inch", "DAYTON mm", "Die Set", "DME Inch", "DME mm", "DMS", "Erowa mm", "FIBRO", "Futaba", "Hasco Inch", "Hasco mm", "HOPPT", "HYSON Inch", "HYSON mm", "Kishin", "LKM", "Meusburger", "Misumi", "Misumi Inch", "MoldDesign", "OKSET", "PCS"];
const files = ["009219", "009222", "009226", "010627", "010793", "017529", "017530", "017532", "017533", "017535", "017536", "034045"];
const props: [string, string][] = [["Name", "ER-009219"], ["Version", "6,0000"], ["Units", "mm"], ["Part Material", ""], ["Description", ""]];
const objects: [string, () => React.JSX.Element, boolean][] = [
  ["Objects", ObjectsIcon, true], ["Electrode11", ElectrodeIcon, false], ["Blank12", BlankIcon, false],
  ["Extension14", ExtensionIcon, true], ["Extension15", ExtensionIcon, false], ["Electrode UCS17", UcsBoltIcon, false],
];

const PanelHead = ({ title, active }: { title: string; active?: boolean }) => (
  <PanelTitle $active={active}>
    <h2>{title}</h2>
    <TitleButton aria-label="Pin"><Pin /></TitleButton>
    <TitleButton aria-label="Close"><Cross /></TitleButton>
  </PanelTitle>
);

function FeatureSidebar() {
  return (
    <Sidebar>
      <PanelHead title="Feature Guide" active />
      <Guide>
        <HolderLine><HolderIcon />Holder</HolderLine>
        <StepTable>
          <StepLabel $required><span>Required</span></StepLabel>
          <StepTools $line><SunkenButton aria-label="Load holder"><DialogIcon /></SunkenButton></StepTools>
          <StepLabel><span>Optional</span></StepLabel>
          <StepTools>
            <PlainButton aria-label="Move"><MoveIcon /></PlainButton>
            <PlainButton aria-label="Rotate"><RotateIcon /></PlainButton>
          </StepTools>
        </StepTable>
        <ActionRow>
          <PlainButton aria-label="Preview"><GlassesIcon /></PlainButton>
          <PlainButton $start aria-label="Preview options"><Caret s={5} /></PlainButton>
          <PlainButton aria-label="OK"><CheckIcon /></PlainButton>
          <PlainButton aria-label="Apply"><CheckNextIcon /></PlainButton>
          <PlainButton aria-label="Exit"><ExitIcon /></PlainButton>
        </ActionRow>
      </Guide>
      <PanelHead title="Features" />
      <FeatureBox>
        <Paper>
          <GridTable>
            <colgroup><col /><col width="16" /><col width="16" /><col width="16" /></colgroup>
            <thead>
              <tr>
                <th><NavRow><PlainButton aria-label="Previous"><NavArrow /></PlainButton><PlainButton aria-label="Next"><NavArrow right /></PlainButton></NavRow></th>
                <th /><th /><th />
              </tr>
            </thead>
            <tbody>
              <tr><td><Cell $indent={11}><ElectrodeRoot />demo_el-EL</Cell></td><td><Centered><Bulb /></Centered></td><td /><td /></tr>
              <tr><td><Cell $indent={12}><Expander aria-label="Collapse"><Sign /></Expander><Cell $indent={11}><UcsIcon />Ucs1</Cell></Cell></td><td /><td /><td /></tr>
              <tr><td><Cell $indent={39}><Expander aria-label="Collapse"><Sign /></Expander><Cell as="span" $indent={11}><BoltIcon /></Cell><Chosen>demo_el-EL-001</Chosen></Cell></td><td /><td /><td /></tr>
              <tr>
                <td><Cell $indent={72} $gap={11}><svg width="9" height="17"><path d="M.5 0v8.500H9" fill="none" stroke="#c0c0c0" /></svg><Cell as="span" $indent={0}><ElectrodeIcon /><Loud>Loc1</Loud></Cell></Cell></td>
                <td><Centered><Bulb on /></Centered></td><td><Centered><EmptySquare /></Centered></td><td><Centered><CubeIcon /></Centered></td>
              </tr>
            </tbody>
          </GridTable>
        </Paper>
      </FeatureBox>
      <Tabs>
        <Tab>Assembly</Tab><Tab>Sets</Tab><Tab $on>Electrode</Tab><Tab>Parting</Tab>
      </Tabs>
      <ObjectBox>
        <GridTable>
          <colgroup><col width="184" /><col /></colgroup>
          <thead><tr><th /><th /></tr></thead>
          <tbody>
            <tr><td><Cell $indent={11} $gap={3}><PartIcon /><Focused>demo_el-EL-001</Focused></Cell></td><td /></tr>
            {objects.map(([name, Icon, expandable]) => (
              <tr key={name}>
                <td>
                  <Cell $indent={9}>
                    <Rail $elbow>{expandable && <Expander aria-label="Expand"><Sign plus /></Expander>}</Rail>
                    <Cell as="span" $indent={7}><Icon />{name}</Cell>
                  </Cell>
                </td>
                <td />
              </tr>
            ))}
          </tbody>
        </GridTable>
      </ObjectBox>
      <Watermark><Logo /></Watermark>
    </Sidebar>
  );
}

export default function App() {
  return (
    <>
      <GlobalStyle />
      <Screen>
        <FeatureSidebar />
        <Window>
          <TitleBar>
            <AppIcon />
            <h1>CimatronE Explorer</h1>
            <CloseButton aria-label="Close"><Cross s={13} w={1} /></CloseButton>
          </TitleBar>
          <ToolBar>
            <Band>
              <Grip />
              <Tool aria-label="Cut"><CutIcon /></Tool>
              <Tool aria-label="Copy"><CopyIcon /></Tool>
              <Tool aria-label="Paste"><PasteIcon /></Tool>
              <Tool aria-label="Delete"><DeleteIcon /></Tool>
              <Tool aria-label="New folder"><NewFolderIcon /></Tool>
            </Band>
            <Band>
              <Grip />
              <Tool aria-label="Back"><HistoryArrow /></Tool>
              <Tool aria-label="Forward"><HistoryArrow off /></Tool>
              <Tool aria-label="Up"><UpIcon /></Tool>
            </Band>
            <Band $grow>
              <Grip />
              <Combo $bold>
                <input aria-label="Path" defaultValue={"D:\\Cimatron\\CimatronE\\Catalogs\\Erowa mm\\"} />
                <DropButton aria-label="Show paths"><Caret /></DropButton>
              </Combo>
              <Tool $wide aria-label="Find next"><FindIcon /></Tool>
              <Tool $wide aria-label="Find previous"><FindIcon back /></Tool>
            </Band>
            <Band>
              <Grip />
              <Tool aria-label="Search"><GlobeIcon /></Tool>
              <Tool $pressed aria-label="Folders"><FoldersIcon /></Tool>
              <Tool $pressed aria-label="Properties"><PropsIcon /></Tool>
              <Tool aria-label="Catalog"><StoreIcon /></Tool>
            </Band>
          </ToolBar>
          <Panes>
            <DockPane>
              <DockHeader />
              <ScrollFrame>
                <Tree>
                  <TreeHeader>Folders</TreeHeader>
                  <TreeList>
                    <TreeRow>
                      <Rail /><Rail /><Rail /><Rail />
                      <Rail $elbow><Expander aria-label="Collapse"><Sign /></Expander></Rail>
                      <FolderIcon /><TreeLabel>Catalogs</TreeLabel>
                    </TreeRow>
                    {folders.map((name) => (
                      <TreeRow key={name}>
                        <Rail /><Rail /><Rail /><Rail /><Rail />
                        <Rail $elbow>{name !== "Erowa mm" && <Expander aria-label="Expand"><Sign plus /></Expander>}</Rail>
                        <FolderIcon open={name === "Erowa mm"} />
                        <TreeLabel $on={name === "Erowa mm"}>{name}</TreeLabel>
                      </TreeRow>
                    ))}
                  </TreeList>
                </Tree>
                <ScrollBar v before={60} size={165} after={218} />
                <ScrollBar size={88} after={53} />
              </ScrollFrame>
            </DockPane>
            <Center>
              <FilterArea>
                <FilterCaption>Type</FilterCaption>
                <FilterLine>
                  <label htmlFor="filter">Filter By:</label>
                  <FilterCombo>
                    <select id="filter"><option>Part Document</option></select>
                    <DropButton as="span"><Caret /></DropButton>
                  </FilterCombo>
                </FilterLine>
              </FilterArea>
              <Note>夹持标准件的位置</Note>
              <ListFrame>
                <ListBody>
                  <FileTable>
                    <colgroup><col width="200" /><col width="100" /><col width="100" /></colgroup>
                    <thead><tr><th><HeaderCell>Name <SortMark /></HeaderCell></th><th>Type</th><th>Modified</th></tr></thead>
                    <tbody>
                      {files.map((n, i) => (
                        <tr key={n}>
                          <td><FileCell><Branch $first={i === 0} $last={i === files.length - 1} /><PartIcon /><FileName $on={i === 0}>{`ER-${n}.elt`}</FileName></FileCell></td>
                          <td>Part Document</td>
                          <td>2004-10-12</td>
                        </tr>
                      ))}
                    </tbody>
                  </FileTable>
                </ListBody>
                <ScrollBar size={233} after={74} />
              </ListFrame>
              <Form onSubmit={(e) => e.preventDefault()}>
                <label htmlFor="name">Name:</label>
                <Combo><input id="name" defaultValue="ER-009219.elt" /><DropButton type="button" aria-label="Show names"><Caret /></DropButton></Combo>
                <PushButton $main>Select</PushButton>
                <label htmlFor="type">Type:</label>
                <Combo $off><select id="type" disabled><option>Part</option></select><DropButton as="span" $off><Caret /></DropButton></Combo>
                <PushButton type="button">Cancel</PushButton>
              </Form>
            </Center>
            <DockPane $side>
              <DockHeader />
              <ScrollFrame $soft>
                <Details>
                  <CardTitle $tall>Preview</CardTitle>
                  <PreviewBox><PartPreview /></PreviewBox>
                  <CardTitle>General</CardTitle>
                  <PropTable>
                    <colgroup><col width="126" /><col /></colgroup>
                    <tbody>{props.map(([k, v]) => <tr key={k}><th scope="row">{k}</th><td>{v}</td></tr>)}</tbody>
                  </PropTable>
                  <CardTitle>Advanced</CardTitle>
                  <ButtonStrip><FormButton $w={127} disabled>Submit Changes</FormButton><FormButton $w={80}>Reset</FormButton></ButtonStrip>
                </Details>
                <ScrollBar v off />
                <ScrollBar size={86} after={53} />
              </ScrollFrame>
            </DockPane>
          </Panes>
          <StatusBar>
            <StatusCell $w={207}>1 object(s) selected</StatusCell>
            <StatusCell>707 KB</StatusCell>
            <StatusCell $w={206}>Cim_E_Desktop</StatusCell>
            <SizeGrip />
          </StatusBar>
        </Window>
      </Screen>
    </>
  );
}
